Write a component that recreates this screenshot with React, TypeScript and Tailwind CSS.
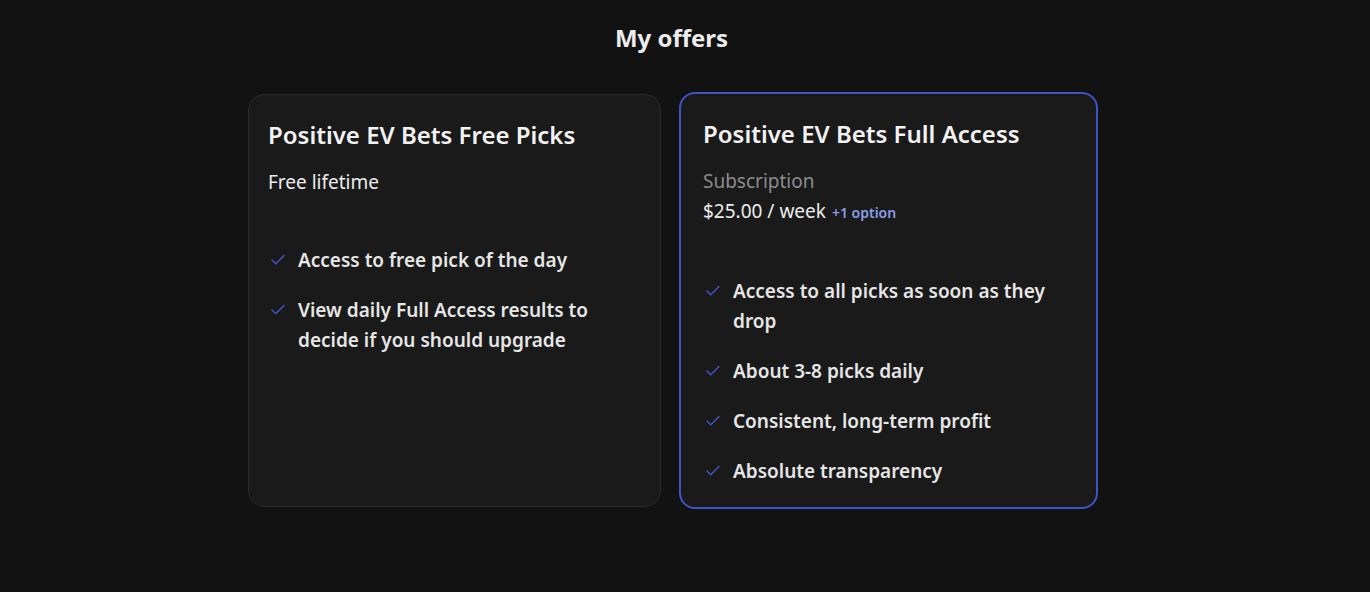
import { Check } from "lucide-react";

interface Offer {
  title: string;
  kind?: string;
  price: string;
  extra?: string;
  features: string[];
  featured?: boolean;
}

const offers: Offer[] = [
  {
    title: "Positive EV Bets Free Picks",
    price: "Free lifetime",
    features: [
      "Access to free pick of the day",
      "View daily Full Access results to decide if you should upgrade",
    ],
  },
  {
    title: "Positive EV Bets Full Access",
    kind: "Subscription",
    price: "$25.00 / week",
    extra: "+1 option",
    features: [
      "Access to all picks as soon as they drop",
      "About 3-8 picks daily",
      "Consistent, long-term profit",
      "Absolute transparency",
    ],
    featured: true,
  },
];

function OfferCard({ offer }: { offer: Offer }) {
  return (
    <div
      className={`flex flex-col rounded-2xl bg-[#1a1a1a] pt-6 pb-[21px] ${
        offer.featured
          ? "-m-0.5 w-[419px] border-2 border-[#3f53c8] px-[22px]"
          : "w-[413px] border border-[#2a2a2a] px-[19px]"
      }`}
    >
      <h2 className="text-[24px] font-semibold leading-8 text-[#f2f2f2]">
        {offer.title}
      </h2>
      <div className="mt-4 text-[19px] leading-[30px]">
        {offer.kind && <div className="text-[#8c8c8c]">{offer.kind}</div>}
        <div className="text-[#ececec]">
          {offer.price}
          {offer.extra && (
            <span className="ml-1.5 text-[14px] font-semibold text-[#8a9de8]">
              {offer.extra}
            </span>
          )}
        </div>
      </div>
      <ul className="mt-12 space-y-5">
        {offer.features.map((f) => (
          <li key={f} className="flex gap-[11px] pl-px">
            <Check
              className="mt-1.5 h-[18px] w-[18px] shrink-0 text-[#4254c6]"
              strokeWidth={1.9}
            />
            <span className="text-[19px] font-semibold leading-[30px] text-[#e6e6e6]">
              {f}
            </span>
          </li>
        ))}
      </ul>
    </div>
  );
}

export default function App() {
  return (
    <div
      className="min-h-[592px] bg-[#121212] pr-[26px] pt-[22px]"
      style={{ fontFamily: '"Noto Sans", "Open Sans", sans-serif' }}
    >
      <h1 className="pr-px text-center text-[24px] font-bold leading-8 text-[#ededed]">
        My offers
      </h1>
      <div className="mt-10 flex items-stretch justify-center gap-5">
        {offers.map((o) => (
          <OfferCard key={o.title} offer={o} />
        ))}
      </div>
    </div>
  );
}
